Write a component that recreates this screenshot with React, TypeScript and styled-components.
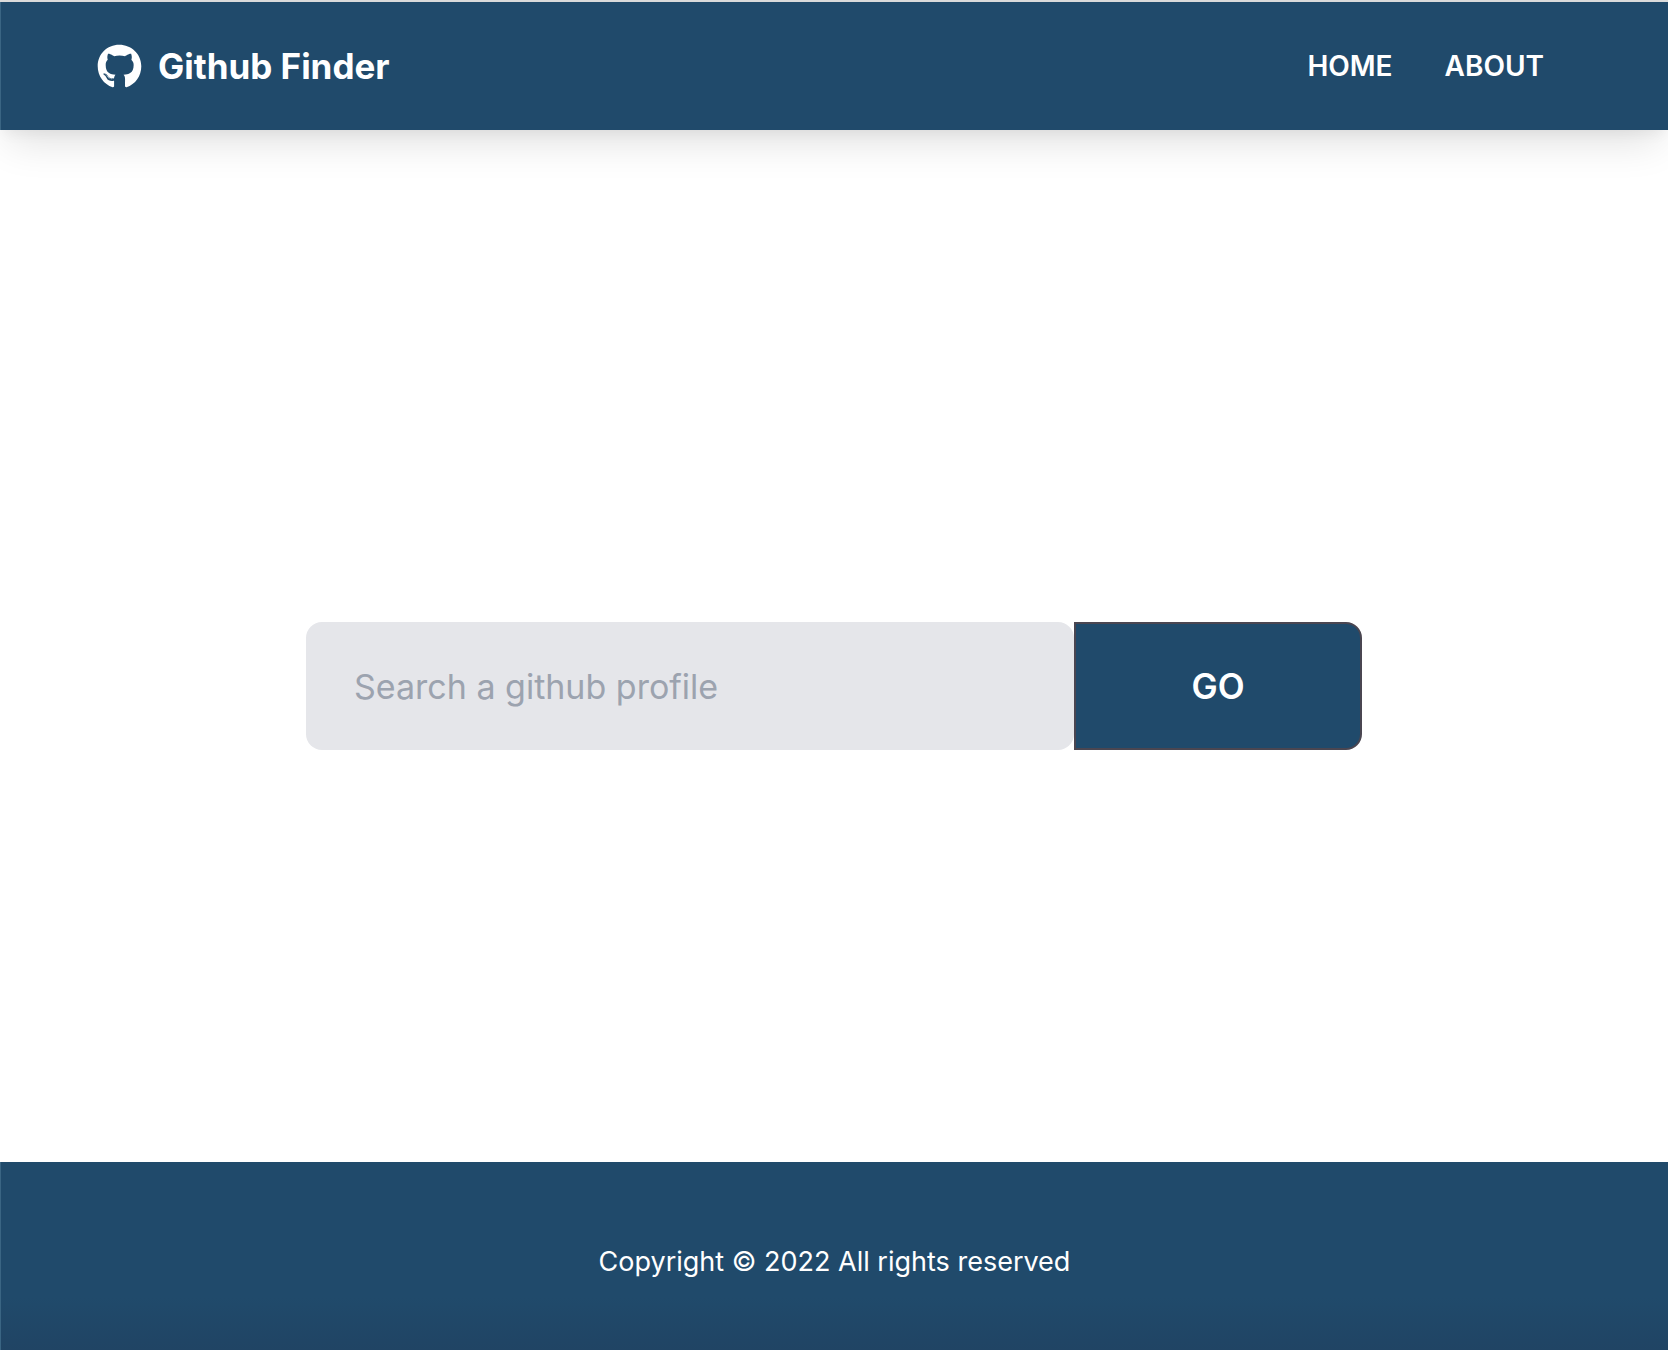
import React, { useState } from "react";
import styled, { createGlobalStyle } from "styled-components";
import { FaGithub } from "react-icons/fa";

const color = {
  primary: "#204a6b",
  primaryEdge: "#3a6583",
  primaryDeep: "#204464",
  border: "#4a4651",
  field: "#e5e6ea",
  placeholder: "#9ca3af",
  rule: "#dcdcdc",
};

const GlobalStyle = createGlobalStyle`
  *, *::before, *::after { box-sizing: border-box; }
  body {
    margin: 0;
    background: #fff;
    font-family: Inter, "Liberation Sans", sans-serif;
  }
`;

const Page = styled.div`
  display: flex;
  flex-direction: column;
  min-height: 100vh;
  border-top: 2px solid ${color.rule};
`;

const Navbar = styled.header`
  display: flex;
  align-items: center;
  justify-content: space-between;
  min-height: 128px;
  padding: 0 124px 0 96px;
  border-left: 1px solid ${color.primaryEdge};
  background: ${color.primary};
  color: #fff;
  box-shadow: 0 20px 40px -8px rgba(0, 0, 0, 0.12), 0 8px 12px -4px rgba(0, 0, 0, 0.05);
`;

const Brand = styled.a`
  display: flex;
  align-items: center;
  gap: 16px;
  color: inherit;
  font-size: 35px;
  font-weight: 700;
  line-height: 56px;
  text-decoration: none;
`;

const BrandIcon = styled(FaGithub)`
  width: 45px;
  height: 45px;
`;

const Links = styled.nav`
  display: flex;
  gap: 52px;
`;

const NavLink = styled.a`
  color: inherit;
  font-size: 28px;
  font-weight: 600;
  line-height: 40px;
  text-decoration: none;
`;

const Main = styled.main`
  display: flex;
  flex: 1;
  align-items: center;
  justify-content: center;
  padding: 80px 48px 0;
`;

const SearchForm = styled.form`
  display: flex;
  width: 100%;
  max-width: 1056px;
  height: 128px;
`;

const SearchInput = styled.input`
  flex: 1;
  min-width: 0;
  padding: 2px 48px 0;
  border: 0;
  border-radius: 16px;
  background: ${color.field};
  color: #1f2937;
  font: 400 34px/56px Inter, "Liberation Sans", sans-serif;

  &::placeholder {
    color: ${color.placeholder};
    opacity: 1;
  }
`;

const SearchButton = styled.button`
  width: 288px;
  padding: 0;
  border: 2px solid ${color.border};
  border-radius: 0 16px 16px 0;
  background: ${color.primary};
  color: #fff;
  font: 600 35px/56px Inter, "Liberation Sans", sans-serif;
  cursor: pointer;
`;

const Footer = styled.footer`
  padding: 80px 48px 68px;
  border-left: 1px solid ${color.primaryEdge};
  background: linear-gradient(${color.primary} 72%, ${color.primaryDeep});
  color: #fff;
  font-size: 27px;
  line-height: 40px;
  text-align: center;
`;

const Copyright = styled.p`
  margin: 0;
`;

export default function App() {
  const [query, setQuery] = useState("");

  return (
    <>
      <GlobalStyle />
      <Page>
        <Navbar>
          <Brand href="#home">
            <BrandIcon aria-hidden="true" />
            Github Finder
          </Brand>
          <Links>
            <NavLink href="#home">HOME</NavLink>
            <NavLink href="#about">ABOUT</NavLink>
          </Links>
        </Navbar>
        <Main>
          <SearchForm onSubmit={(event) => event.preventDefault()}>
            <SearchInput
              type="text"
              aria-label="Search a github profile"
              placeholder="Search a github profile"
              value={query}
              onChange={(event) => setQuery(event.target.value)}
            />
            <SearchButton type="submit">GO</SearchButton>
          </SearchForm>
        </Main>
        <Footer>
          <Copyright>Copyright © 2022 All rights reserved</Copyright>
        </Footer>
      </Page>
    </>
  );
}
